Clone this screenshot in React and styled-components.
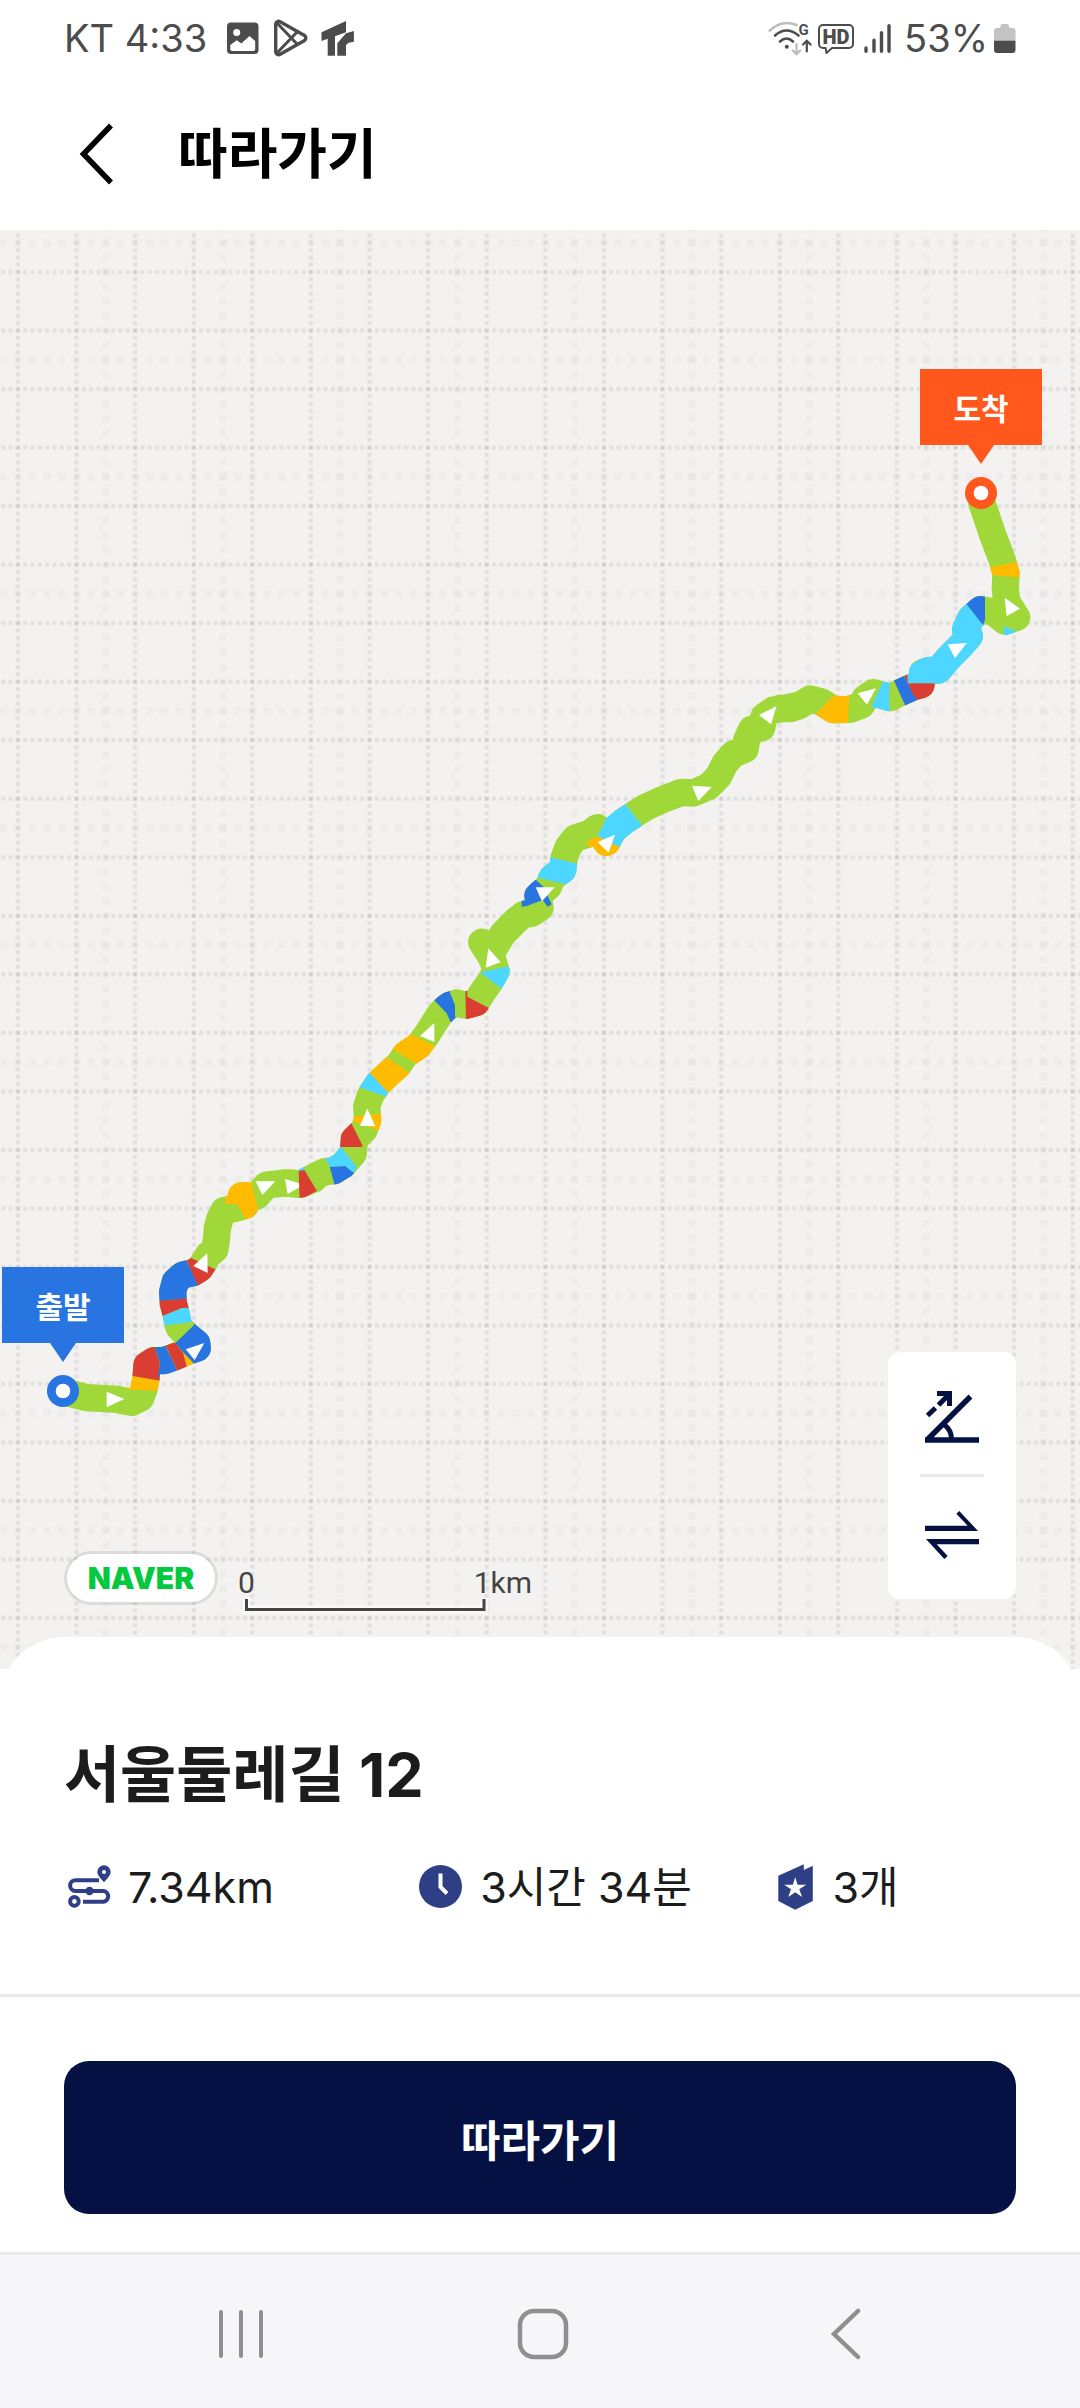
import React, { useState } from "react";
import styled, { createGlobalStyle } from "styled-components";

const GlobalStyle = createGlobalStyle`
    * {
        box-sizing: border-box;
    }
    body {
        margin: 0;
        background-color: #fff;
        font-family: Inter, "Noto Sans CJK KR", sans-serif;
    }
    button {
        padding: 0;
        border: none;
        background: none;
        font-family: inherit;
        cursor: pointer;
    }
    svg {
        display: block;
        flex: none;
    }
`;

const Page = styled.div`
    display: flex;
    flex-direction: column;
    min-height: 100vh;
`;

const StatusBar = styled.div`
    display: flex;
    justify-content: space-between;
    align-items: center;
    height: 76px;
    padding: 0 64px;
    color: #4c4c4c;
    font-size: 38px;
    line-height: 48px;
`;

const StatusGroup = styled.div`
    display: flex;
    align-items: center;
    gap: ${(props) => props.$gap}px;
`;

const Carrier = styled.span`
    margin-right: 8px;
`;

const Percent = styled.span`
    margin-left: 2px;
`;

const Header = styled.header`
    display: flex;
    align-items: center;
    gap: 50px;
    height: 154px;
    padding: 4px 64px 0;
`;

const BackButton = styled.button`
    display: flex;
    justify-content: center;
    align-items: center;
    width: 64px;
    height: 80px;
`;

const PageTitle = styled.h1`
    margin: 0;
    color: #000;
    font-size: 54px;
    font-weight: 700;
    line-height: 64px;
`;

const MapArea = styled.main`
    position: relative;
    flex: 1;
    min-height: 1300px;
    background-color: #f3f2f0;
    overflow: hidden;
`;

// 지도 배경과 경로를 겹쳐서 그린다
const MapLayer = styled.svg`
    position: absolute;
    top: 0;
    left: 0;
    width: 100%;
    height: 100%;
`;

const Pin = styled.div`
    position: absolute;
    left: ${(props) => props.$x}px;
    top: ${(props) => props.$y}px;
    display: flex;
    flex-direction: column;
    align-items: center;
    width: 122px;
    color: ${(props) => props.$color};
`;

const PinLabel = styled.span`
    width: 100%;
    height: 76px;
    background-color: currentColor;
    text-align: center;
    font-size: 30px;
    font-weight: 700;
    line-height: 80px;

    span {
        color: #fff;
    }
`;

const MapFooter = styled.div`
    position: absolute;
    left: 64px;
    right: 64px;
    bottom: 55px;
    display: flex;
    align-items: flex-end;
`;

const NaverBadge = styled.a`
    width: 154px;
    height: 54px;
    margin-bottom: 9px;
    border: 3px solid rgba(0, 0, 0, 0.09);
    border-radius: 27px;
    background-color: #fff;
    background-clip: padding-box;
    color: #03c93f;
    font-size: 30px;
    font-weight: 900;
    line-height: 48px;
    text-align: center;
    text-decoration: none;
`;

const Scale = styled.div`
    width: 294px;
    margin: 0 auto 0 20px;
`;

const ScaleLabels = styled.div`
    display: flex;
    justify-content: space-between;
    color: #444;
    font-family: Roboto, sans-serif;
    font-size: 30px;
    line-height: 30px;
    text-shadow: 0 0 2px #fff;
`;

const ToolBox = styled.div`
    display: flex;
    flex-direction: column;
    align-items: center;
    width: 128px;
    margin-bottom: 15px;
    border-radius: 12px;
    background-color: #fff;
`;

const ToolButton = styled.button`
    display: flex;
    justify-content: center;
    align-items: center;
    width: 128px;
    height: 122px;
`;

const ToolLine = styled.div`
    width: 64px;
    height: 3px;
    background-color: #e9e9e9;
`;

const Sheet = styled.section`
    position: relative;
    margin-top: -32px;
    padding: 102px 64px 83px;
    border-radius: 64px 64px 0 0;
    background-color: #fff;
    color: #1c1c1c;
`;

const CourseName = styled.h2`
    margin: 0 0 51px;
    font-size: 61px;
    font-weight: 700;
    line-height: 73px;
`;

const Stats = styled.ul`
    display: grid;
    grid-template-columns: 37fr 37fr 26fr;
    margin: 0;
    padding: 0;
    list-style: none;
`;

const Stat = styled.li`
    display: flex;
    align-items: center;
    gap: 16px;
    height: 48px;
    font-size: 43px;
    font-weight: 400;
    line-height: 48px;
    white-space: nowrap;
`;

const ActionBar = styled.div`
    padding: 64px 64px 38px;
    border-top: 3px solid #e9e9e9;
`;

const FollowButton = styled.button`
    display: block;
    width: 100%;
    height: 153px;
    border-radius: 25px;
    background-color: #051142;
    color: #fff;
    font-size: 43px;
    font-weight: 700;
`;

const NavBar = styled.nav`
    display: flex;
    height: 156px;
    padding: 4px 83px 0 90px;
    border-top: 3px solid #e9e9e9;
    background-color: #f6f6f8;
`;

const NavButton = styled.button`
    display: flex;
    flex: 1;
    justify-content: center;
    align-items: center;
`;

const GREEN = "#a0d83a";
const YELLOW = "#ffbb00";
const RED = "#da3e32";
const BLUE = "#2874e0";
const CYAN = "#4dd6ff";

// 경로 타일: 좌표는 타일 안에서 3배 단위
const tiles = [
    {
        id: "south",
        x: 0,
        y: 930,
        line: "189,695 262,713 300,715 350,718 395,727 422,714 431,690 438,655 441,615 462,602 492,602 520,592 560,575 592,564 590,550 560,525 536,500 528,460 520,430 518,395 526,365 548,345 580,338 600,325 625,285 645,268 650,230 652,205 660,175 672,152 705,145 736,136 724,108 770,108 800,75 855,69 903,72 940,58",
        patches: [
            [YELLOW, "385,646 490,664 480,693 380,688"],
            [RED, "385,646 490,664 476,640 480,610 462,555 400,540 380,600"],
            [BLUE, "462,555 480,610 474,650 535,650 532,632 498,562 495,550"],
            [RED, "495,553 526,548 550,580 562,625 534,640 532,632"],
            [YELLOW, "550,580 582,600 585,615 562,625"],
            [BLUE, "583,480 583,494 526,549 555,583 583,612 640,612 645,480"],
            [CYAN, "480,471 545,444 575,440 582,485 485,497"],
            [RED, "470,422 570,413 575,443 545,444 480,471"],
            [BLUE, "470,423 562,415 562,390 597,378 556,295 500,285 460,350"],
            [RED, "556,292 575,295 655,332 640,370 596,382"],
            [YELLOW, "675,130 712,134 742,185 775,150 752,60 685,50"],
        ],
        arrows: ["320,695 373,717 320,742", "613,549 557,568 584,600", "622,280 580,318 623,339", "767,64 826,64 787,105", "855,57 912,74 863,102"],
    },
    {
        id: "hill",
        x: 260,
        y: 710,
        line: "75,729 123,732 160,712 195,695 220,693 248,676 280,640 283,598 312,570 323,540 320,500 332,465 355,430 385,402 415,375 437,343 475,318 500,285 525,245 540,222 565,197 590,189 618,196 648,188 667,158 690,125 708,93 700,65 690,45",
        patches: [
            [CYAN, "116,680 135,680 131,692 116,694"],
            [RED, "116,693 133,690 175,760 119,785"],
            [BLUE, "209,680 256,678 280,697 295,700 270,740 228,750"],
            [CYAN, "195,655 236,612 292,684 278,697 256,678 210,680"],
            [RED, "272,545 308,618 305,621 230,621 230,545"],
            [YELLOW, "275,530 370,520 370,582 345,568 275,542"],
            [CYAN, "295,440 328,392 388,457 384,472 302,443"],
            [YELLOW, "322,390 372,346 450,400 388,462"],
            [YELLOW, "392,324 448,280 532,322 472,373"],
            [BLUE, "522,180 566,148 585,195 585,230 599,236 577,257 560,220"],
            [RED, "616,145 622,145 622,170 694,208 660,245 618,245"],
            [CYAN, "660,97 755,77 760,110 732,152"],
        ],
        arrows: ["322,506 300,557 346,559", "523,249 480,288 523,306"],
    },
    {
        id: "ridge",
        x: 380,
        y: 410,
        line: "330,945 305,907 345,920 370,880 410,840 433,822 455,820 480,803 474,768 505,740 517,712 548,690 552,655 565,620 585,595 630,580 652,563 680,607 700,570 730,545 765,522 800,500 850,478 905,457 940,459 985,440 1015,410 1035,370 1060,342 1095,328 1100,300 1115,268 1145,264 1152,230 1180,210 1215,205 1245,198",
        patches: [
            [BLUE, "425,720 468,720 490,740 515,793 503,800 488,780 440,798 425,800"],
            [CYAN, "465,711 510,652 598,673 600,710 556,733"],
            [YELLOW, "620,605 652,588 724,622 710,655 640,655"],
            [CYAN, "651,587 666,563 680,530 700,508 729,485 790,560 750,590 724,624"],
        ],
        arrows: ["325,925 362,967 317,983", "467,742 524,742 486,784", "705,584 653,606 686,638", "936,437 995,441 955,483", "1190,198 1137,225 1173,253"],
    },
    {
        id: "north",
        x: 700,
        y: 110,
        line: "240,1105 270,1106 298,1097 330,1077 365,1086 400,1109 450,1108 485,1095 495,1075 520,1058 570,1073 600,1058 640,1040 663,1034 668,998 685,992 715,990 745,955 780,920 808,888 797,868 812,835 842,809 880,815 915,844 950,832 920,785 916,745 918,700 905,655 880,590 846,490",
        patches: [
            [YELLOW, "345,1125 378,1090 410,1060 449,1055 443,1160 370,1150"],
            [CYAN, "552,1018 570,1030 567,1075 571,1122 540,1120 515,1098"],
            [BLUE, "580,1018 610,1003 640,1062 660,1085 618,1102"],
            [RED, "610,1000 628,995 625,1030 712,1028 710,1060 660,1090 638,1062"],
            [CYAN, "624,1030 620,985 690,935 740,890 745,830 797,787 850,852 862,900 790,1000 750,1045 700,1030"],
            [BLUE, "797,789 825,755 855,755 855,840 849,855"],
            [CYAN, "912,858 948,874 940,890 910,890"],
            [YELLOW, "865,683 960,664 970,714 865,704"],
        ],
        arrows: ["743,913 800,909 765,955", "473,1060 528,1045 501,1094", "914,773 960,806 920,829"],
    },
];

const pins = [
    { id: "end", label: "도착", x: 920, y: 139, color: "#ff571c" },
    { id: "start", label: "출발", x: 2, y: 1037, color: "#2874e0" },
];

function tileTransform(tile) {
    return `translate(${tile.x} ${tile.y}) scale(0.33333)`;
}

function CourseMap() {
    return (
        <MapLayer aria-hidden="true">
            <defs>
                <pattern id="grid" x="14.2" y="38.3" width="117.2" height="117.04" patternUnits="userSpaceOnUse">
                    <g stroke="#000" strokeOpacity="0.022" strokeWidth="7">
                        <path strokeDasharray="7 7.65" d="M91.6 0.2V117" />
                        <path strokeDasharray="7 7.65" d="M0.2 91.5H117.2" />
                    </g>
                    <g stroke="#000" strokeOpacity="0.075" strokeWidth="4">
                        <path strokeDasharray="4 3.315" d="M3.7 1.7V117M62.3 1.7V117" />
                        <path strokeDasharray="4 3.325" d="M1.7 3.7H117.2M1.7 62.2H117.2" />
                    </g>
                </pattern>
                {tiles.map((tile) => (
                    <mask key={tile.id} id={`road-${tile.id}`} maskUnits="userSpaceOnUse" x="-100" y="-100" width="1500" height="1500">
                        <polyline points={tile.line} fill="none" stroke="#fff" strokeWidth="82" strokeLinecap="round" strokeLinejoin="round" />
                    </mask>
                ))}
            </defs>
            <rect width="100%" height="100%" fill="url(#grid)" />
            {tiles.map((tile) => (
                <g key={tile.id} transform={tileTransform(tile)}>
                    <polyline points={tile.line} fill="none" stroke={GREEN} strokeWidth="82" strokeLinecap="round" strokeLinejoin="round" />
                </g>
            ))}
            {tiles.map((tile) => (
                <g key={tile.id} transform={tileTransform(tile)}>
                    <g mask={`url(#road-${tile.id})`}>
                        {tile.patches.map(([color, points]) => (
                            <polygon key={points} points={points} fill={color} />
                        ))}
                    </g>
                    {tile.arrows.map((points) => (
                        <polygon key={points} points={points} fill="#fff" />
                    ))}
                </g>
            ))}
        </MapLayer>
    );
}

function StatusIcons() {
    return (
        <StatusGroup $gap={6}>
            <svg width="44" height="36" viewBox="0 0 44 36" fill="none" stroke="#4c4c4c" strokeWidth="2.6" strokeLinecap="round">
                <path stroke="#bcbcbc" d="M1.8 10.5Q14 -1 28.5 5" />
                <path d="M7 15.5Q18.5 5.5 30.5 15.5" />
                <path d="M12 21.5Q18.5 15.5 25 21.5" />
                <circle cx="18.8" cy="26.7" r="2" fill="#4c4c4c" stroke="none" />
                <path stroke="#bcbcbc" strokeWidth="2.2" d="M28.5 24V34M24.7 30.5L28.5 34.2L32.3 30.5" />
                <path strokeWidth="2.2" d="M38.8 31.5V21M35 24.5L38.8 20.8L42.6 24.5" />
                <text x="30.5" y="15" fill="#4c4c4c" stroke="none" fontFamily="Roboto" fontSize="15" fontWeight="700">G</text>
            </svg>
            <svg width="36" height="36" viewBox="0 0 36 36" fill="none" stroke="#4c4c4c" strokeWidth="2">
                <path strokeLinejoin="round" d="M5 5H31a4 4 0 0 1 4 4V24a4 4 0 0 1 -4 4H14L8.5 33L7.6 28H5a4 4 0 0 1 -4 -4V9a4 4 0 0 1 4 -4Z" />
                <text x="4.5" y="24" fill="#4c4c4c" stroke="none" fontFamily="Roboto" fontSize="20" fontWeight="900">HD</text>
            </svg>
            <svg width="36" height="36" viewBox="-4 0 36 36" stroke="#4c4c4c" strokeWidth="3.4" strokeLinecap="round">
                <path d="M2 28V31.3M10 20.3V31.3M17.5 12.7V31.3M25 5.7V31.3" />
            </svg>
            <Percent>53%</Percent>
            <svg width="22" height="36" viewBox="0 0 22 36">
                <path fill="#c3c3c3" d="M0 11a3 3 0 0 1 3 -3H5.5a2 2 0 0 0 1 -2a2 2 0 0 1 2 -2H13a2 2 0 0 1 2 2a2 2 0 0 0 1 2H18.5a3 3 0 0 1 3 3V21H0Z" />
                <path fill="#4c4c4c" d="M0 20.7H21.5V30a3 3 0 0 1 -3 3H3a3 3 0 0 1 -3 -3Z" />
            </svg>
        </StatusGroup>
    );
}

function App() {
    const [reversed, setReversed] = useState(false);

    return (
        <Page>
            <GlobalStyle />
            <StatusBar>
                <StatusGroup $gap={12}>
                    <Carrier>KT 4:33</Carrier>
                    <svg width="32" height="32" viewBox="0 0 32 32">
                        <rect width="31.5" height="31.5" y="0.5" rx="4" fill="#4c4c4c" />
                        <circle cx="9.7" cy="10.5" r="3.5" fill="#fff" />
                        <path fill="#fff" d="M3.3 23L9.8 18.3L14.3 21.5L22.5 14L28.2 19V27a2 2 0 0 1 -2 2H5.3a2 2 0 0 1 -2 -2Z" />
                    </svg>
                    <svg width="38" height="38" viewBox="0 0 38 38" fill="none" stroke="#4c4c4c" strokeWidth="3.4" strokeLinejoin="round">
                        <path d="M4.7 5.5a3 3 0 0 1 4.5 -2.8L33.5 16.5a3 3 0 0 1 0 5L9.2 35.3a3 3 0 0 1 -4.5 -2.8Z" />
                        <path strokeWidth="3" d="M6 4L26.5 25.5M6 34L26.5 12.5" />
                    </svg>
                    <svg width="36" height="36" viewBox="0 0 36 36" fill="#4c4c4c">
                        <path d="M0.5 12.3L25 1V12.3L14 16.3V35.7H6.7V18.7L0.5 21Z" />
                        <path d="M16.3 35.7V23.3L25 13.3L32.9 11V21.7L27.7 22.7L25 25V35.7Z" />
                    </svg>
                </StatusGroup>
                <StatusIcons />
            </StatusBar>
            <Header>
                <BackButton type="button" aria-label="뒤로">
                    <svg width="64" height="64" viewBox="0 0 64 64" fill="none" stroke="#000" strokeWidth="5.5">
                        <path d="M47 2.5L19.5 31L47 59.5" />
                    </svg>
                </BackButton>
                <PageTitle>따라가기</PageTitle>
            </Header>
            <MapArea>
                <CourseMap />
                {pins.map((pin) => (
                    <Pin key={pin.id} $x={pin.x} $y={pin.y} $color={pin.color}>
                        <PinLabel><span>{pin.label}</span></PinLabel>
                        <svg width="34" height="66" viewBox="0 0 34 66">
                            <path fill="currentColor" d="M4 0H30L17 19Z" />
                            <circle cx="17" cy="48" r="16" fill="currentColor" />
                            <circle cx="17" cy="48" r="7.3" fill="#fff" />
                        </svg>
                    </Pin>
                ))}
                <MapFooter>
                    <NaverBadge href="#naver">NAVER</NaverBadge>
                    <Scale>
                        <ScaleLabels>
                            <span>0</span>
                            <span>1km</span>
                        </ScaleLabels>
                        <svg width="252" height="16" viewBox="0 0 252 16" fill="none">
                            <path stroke="#fff" strokeOpacity="0.6" strokeWidth="8" d="M8.5 0V11.5H246V0" />
                            <path stroke="#444" strokeWidth="3" d="M8.5 1V11.5H246V1" />
                        </svg>
                    </Scale>
                    <ToolBox>
                        <ToolButton type="button" aria-label="경사도">
                            <svg width="64" height="64" viewBox="0 0 64 64" fill="none" stroke="#051142" strokeWidth="5.5">
                                <path d="M5 59H59M7 59L50.5 15.5" />
                                <path strokeWidth="5" d="M24 43.5Q31.5 49 31.5 58" />
                                <path strokeWidth="5" d="M7.5 34.5L15.5 27M18.5 24L29 13.5M17 12.5H29.5V25" />
                            </svg>
                        </ToolButton>
                        <ToolLine />
                        <ToolButton type="button" aria-label="방향 전환" aria-pressed={reversed} onClick={() => setReversed(!reversed)}>
                            <svg width="64" height="64" viewBox="0 0 64 64" fill="#051142">
                                <path d="M5 19.7H47.7L36.3 7.7L39.3 5L58 25H5Z" />
                                <path d="M59 38.3H16.7L27.7 50L24.3 53L6 33H59Z" />
                            </svg>
                        </ToolButton>
                    </ToolBox>
                </MapFooter>
            </MapArea>
            <Sheet>
                <CourseName>서울둘레길 12</CourseName>
                <Stats>
                    <Stat>
                        <svg width="48" height="48" viewBox="0 0 48 48" fill="none" stroke="#2f3f85" strokeWidth="4">
                            <path d="M35 17.2H11.5a5.4 5.4 0 0 0 0 10.8H39.5a5.4 5.4 0 0 1 0 10.7H19" />
                            <circle cx="25.5" cy="28" r="4.2" fill="#2f3f85" stroke="none" />
                            <circle cx="10.4" cy="38.4" r="4.3" />
                            <path fill="#2f3f85" stroke="#fff" strokeWidth="1.2" d="M40 20C36 16 32.7 13 32.7 9a7.3 7.3 0 0 1 14.6 0C47.3 13 44 16 40 20Z" />
                            <circle cx="40" cy="9" r="2" fill="#fff" stroke="none" />
                        </svg>
                        7.34km
                    </Stat>
                    <Stat>
                        <svg width="48" height="48" viewBox="0 0 48 48" fill="none">
                            <circle cx="24.5" cy="23.5" r="21.5" fill="#2f3f85" />
                            <path stroke="#fff" strokeWidth="4" d="M24.5 10.5V24L31 30.5" />
                        </svg>
                        3시간 34분
                    </Stat>
                    <Stat>
                        <svg width="48" height="48" viewBox="0 0 48 48">
                            <path fill="#2f3f85" d="M10.3 12.7L35.8 1.3V7L44.8 2.7V38L27.2 46.7L10.3 38Z" />
                            <path fill="#fff" d="M27.2 14.3L29.6 21.7H38.2L31.3 26.3L34.1 34L27.2 29.3L20.3 34L23 26.3L16.2 21.7H24.8Z" />
                        </svg>
                        3개
                    </Stat>
                </Stats>
            </Sheet>
            <ActionBar>
                <FollowButton type="button">따라가기</FollowButton>
            </ActionBar>
            <NavBar>
                <NavButton type="button" aria-label="최근 앱">
                    <svg width="52" height="52" viewBox="0 0 52 52" stroke="#8f8f8f" strokeWidth="4" strokeLinecap="round">
                        <path d="M6 4V48M26 4V48M46 4V48" />
                    </svg>
                </NavButton>
                <NavButton type="button" aria-label="홈">
                    <svg width="52" height="52" viewBox="0 0 52 52" fill="none" stroke="#8f8f8f" strokeWidth="4.5">
                        <rect x="3" y="3" width="46" height="46" rx="14" />
                    </svg>
                </NavButton>
                <NavButton type="button" aria-label="이전">
                    <svg width="52" height="52" viewBox="0 0 52 52" fill="none" stroke="#8f8f8f" strokeWidth="4.5" strokeLinecap="round">
                        <path d="M38 3L14 26L38 49" />
                    </svg>
                </NavButton>
            </NavBar>
        </Page>
    );
}

export default App;
